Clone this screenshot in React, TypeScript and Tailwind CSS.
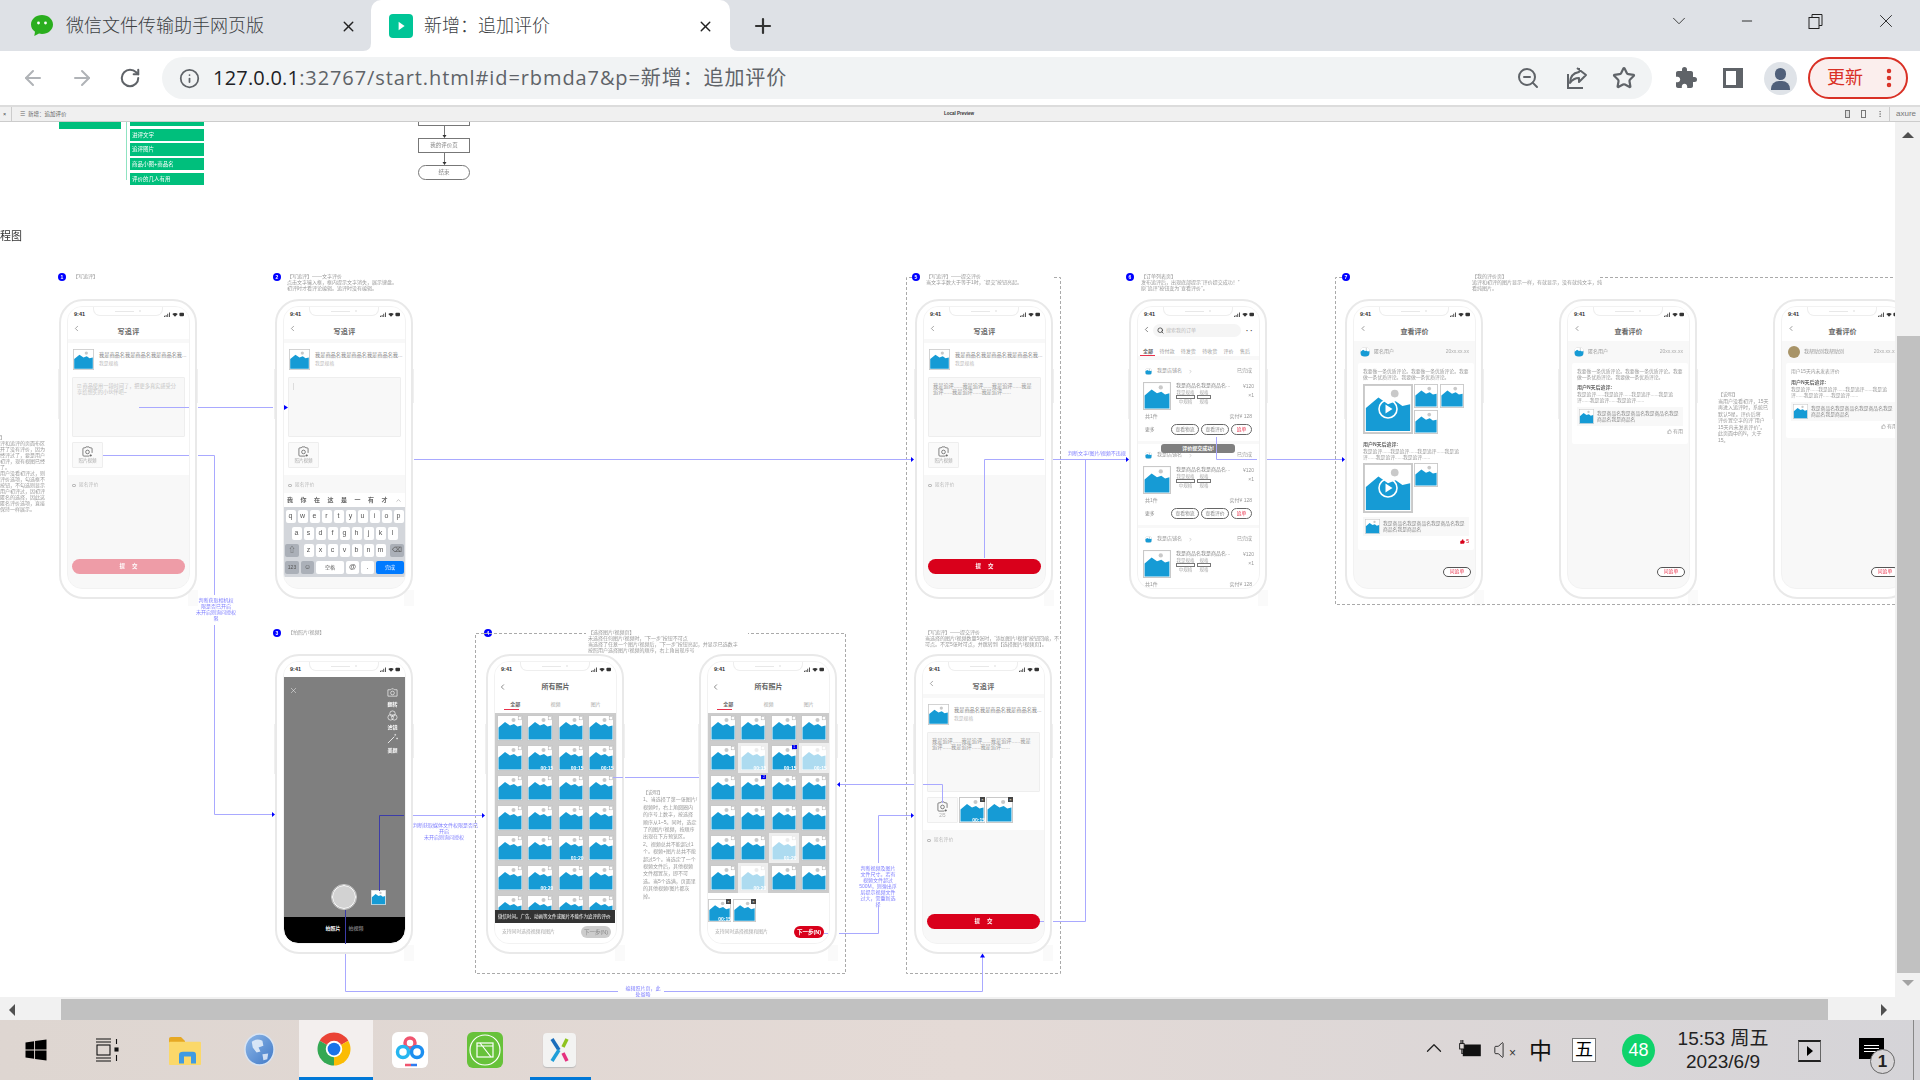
import React from "react";
import { ArrowLeft, ArrowRight, RotateCw, Info, ZoomOut, Star, X, Plus, Minus, ChevronDown, ChevronLeft, ChevronRight, ChevronUp, Search, Volume, ThumbsUp, EllipsisVertical } from "lucide-react";
import { MdExtension } from "react-icons/md";
import { FaWindows } from "react-icons/fa";

const BLUE = "#169bd5";

function Thumb({ className = "", chk = false, dur = "", badge = "", close = false, faded = false }: { className?: string; chk?: boolean; dur?: string; badge?: string; close?: boolean; faded?: boolean }) {
  return (
    <div className={`relative shrink-0 ${faded ? "bg-white outline-2 outline-[#eeeeee]" : ""} ${className}`}>
      <svg viewBox="0 0 26 26" preserveAspectRatio="none" className={`block w-full h-full ${faded ? "opacity-35" : ""}`}>
        <rect x="0" y="0" width="26" height="26" fill="#c9c9c9" />
        <rect x="1" y="1" width="24" height="24" fill="#fff" />
        <circle cx="16.5" cy="5" r="2" fill="#c9c9c9" />
        <path d="M1.5 24.5 V12.5 L8 7 L13 10.5 L17 9 L20.5 11.5 L24.5 10.5 V24.5 Z" fill={BLUE} />
        {chk && <rect x="21.2" y="1.6" width="3.2" height="3.2" fill="#fff" stroke="#aaa" strokeWidth="0.5" />}
      </svg>
      {dur && <span className="absolute right-0 bottom-0 text-[5px] leading-[6px] text-white font-bold">{dur}</span>}
      {badge && <span className="absolute right-0 top-0 w-[5px] h-[4px] bg-[#0000ee] text-white text-[3px] leading-[4px] text-center">{badge}</span>}
      {close && <span className="absolute right-0 top-0 w-[5px] h-[5px] bg-[#444] text-white text-[4px] leading-[5px] text-center">×</span>}
    </div>
  );
}

function StatusBar() {
  return (
    <div className="relative h-[15px] shrink-0 bg-white flex items-center justify-between pl-[6px] pr-[4px]">
      <span className="text-[5.5px] font-bold text-[#333]">9:41</span>
      <div className="absolute left-[25px] top-0 w-[70px] h-[9px] rounded-b-[7px] border border-t-0 border-[#eeeeee] bg-white flex items-center justify-center gap-[5px]">
        <span className="w-[19px] h-[1px] bg-[#e8e8e8]" />
        <span className="w-[2px] h-[2px] rounded-full bg-[#e8e8e8]" />
      </div>
      <svg viewBox="0 0 24 6" className="w-[22px] h-[5px]">
        <path d="M0 6h1V4.5H0zM2 6h1V3.5H2zM4 6h1V2H4zM6 6h1V.5H6z" fill="#333" />
        <path d="M10 2.5 C12 0.6 14.5 0.6 16.5 2.5 L13.2 5.8 Z" fill="#333" />
        <rect x="18.5" y="1" width="5.5" height="4" rx="1" fill="#333" />
      </svg>
    </div>
  );
}

function Phone({ className, children, noPatch = false }: { className: string; children: React.ReactNode; noPatch?: boolean }) {
  return (
    <div className={`absolute w-[138px] h-[300px] ${className}`}>
      {!noPatch && <div className="absolute left-[129px] top-[291px] w-[10px] h-[16px] bg-[#fafafa]" />}
      <div className="absolute left-[-1px] top-[70px] w-[1px] h-[50px] bg-[#f0f0f0]" />
      <div className="absolute right-[-1px] top-[70px] w-[1px] h-[34px] bg-[#f0f0f0]" />
      <div className="absolute inset-0 rounded-[24px] border-2 border-[#e9e9e9] bg-white" />
      <div className="absolute left-[9px] top-[8px] w-[121px] h-[281px] rounded-[14px] overflow-hidden flex flex-col bg-[#f8f8f8] outline outline-[#f2f2f2]">
        <StatusBar />
        {children}
      </div>
    </div>
  );
}

function Nav({ title }: { title: string }) {
  return (
    <div className="relative h-[17px] shrink-0 bg-white flex items-center justify-center pt-[4px]">
      <ChevronLeft className="absolute left-[4px] top-[2px] w-[9px] h-[9px] text-[#666]" strokeWidth={1.5} />
      <span className="text-[7px] font-bold text-[#666] tracking-[0.3px]">{title}</span>
    </div>
  );
}

const REVIEW = "我是追评......我是追评......我是追评......我是追评......我是追评......我是追评......";

function CameraPlus({ label }: { label: string }) {
  return (
    <div className="w-[31px] h-[26px] shrink-0 border border-[#eeeeee] rounded-[1px] bg-[#fafafa] flex flex-col items-center pt-[3px]">
      <svg viewBox="0 0 12 12" className="w-[11px] h-[11px]" fill="none" stroke="#555" strokeWidth="0.8">
        <path d="M3.5 2 L4.3 1 H7.7 L8.5 2 H10 Q11 2 11 3 V7.5 M8 11 H2 Q1 11 1 10 V3 Q1 2 2 2 H3.5" />
        <circle cx="6" cy="6.5" r="2" />
        <path d="M9.5 9 V11.6 M8.2 10.3 H10.8" />
      </svg>
      <span className="text-[4.5px] leading-[6px] mt-[1px] text-[#aaa]">{label}</span>
    </div>
  );
}

function WritePage({ text = "", hint = false, caret = false, keyboard = false, btn = "", photos = false }: { text?: string; hint?: boolean; caret?: boolean; keyboard?: boolean; btn?: string; photos?: boolean }) {
  return (
    <>
      <Nav title="写追评" />
      <div className="h-[4px] shrink-0" />
      <div className="h-[132px] shrink-0 bg-white px-[4px] pt-[6px] flex flex-col">
        <div className="h-[21px] flex items-start gap-[5px] pl-[1px] shrink-0">
          <Thumb className="w-[21px] h-[21px]" />
          <div className="flex flex-col pt-[3px] text-[#999]">
            <span className="text-[5.2px] leading-[7px] whitespace-nowrap text-[#888]">我是商品名我是商品名我是商品名我...</span>
            <span className="text-[4.8px] leading-[9px] whitespace-nowrap text-[#bbb]">我是规格</span>
          </div>
        </div>
        <div className="mt-[7px] h-[60px] shrink-0 bg-[#f8f8f8] border border-[#eeeeee] rounded-[1px] px-[4px] pt-[5px] text-[5.2px] leading-[6px] text-[#999]">
          {hint && <span className="text-[#c4c4c4]">☑ 商品使用一段时间了，把更多真实感受分享给想买的小伙伴吧~</span>}
          {caret && <span className="block w-[1px] h-[7px] bg-[#ddd]" />}
          {text}
        </div>
        <div className="mt-[5px] flex gap-[1px]">
          <CameraPlus label={photos ? "2/5" : "照片视频"} />
          {photos && (
            <>
              <Thumb className="w-[26px] h-[26px]" dur="00:15" close />
              <Thumb className="w-[27px] h-[26px]" close />
            </>
          )}
        </div>
      </div>
      <div className="mt-[7px] pl-[4px] flex items-center gap-[3px] h-[6px] shrink-0">
        <span className="w-[4px] h-[3px] border border-[#bbb] rounded-[1px]" />
        <span className="text-[4.8px] text-[#bbb]">匿名评价</span>
      </div>
      {keyboard && <Keyboard />}
      {btn && (
        <div className={`mt-auto mb-[14px] mx-[4px] h-[15px] rounded-full flex items-center justify-center gap-[7px] text-white text-[5.5px] font-bold ${btn}`}>
          <span>提</span>
          <span>交</span>
        </div>
      )}
    </>
  );
}

function Key({ k, className = "" }: { k: string; className?: string }) {
  return <span className={`h-[13px] rounded-[2px] flex items-center justify-center text-[7px] text-[#555] ${className}`}>{k}</span>;
}

function Keyboard() {
  return (
    <div className="mt-[5px] w-[121px] shrink-0">
      <div className="h-[14px] bg-white flex items-center justify-between px-[3px] text-[6px] font-bold text-[#666]">
        {["我", "你", "在", "这", "是", "一", "有", "才"].map((c) => (<span key={c}>{c}</span>))}
        <ChevronUp className="w-[7px] h-[7px] text-[#999]" />
      </div>
      <div className="h-[70px] bg-[#d3d6db] flex flex-col gap-[4px] pt-[3px]">
        <div className="flex justify-center gap-[2px]">
          {"qwertyuiop".split("").map((c) => (<Key key={c} k={c} className="w-[10px] bg-white" />))}
        </div>
        <div className="flex justify-center gap-[2px]">
          {"asdfghjkl".split("").map((c) => (<Key key={c} k={c} className="w-[10px] bg-white" />))}
        </div>
        <div className="flex justify-between px-[1px]">
          <Key k="⇧" className="w-[14px] bg-[#abb0b8]" />
          <div className="flex gap-[2px]">
            {"zxcvbnm".split("").map((c) => (<Key key={c} k={c} className="w-[10px] bg-white" />))}
          </div>
          <Key k="⌫" className="w-[14px] bg-[#abb0b8]" />
        </div>
        <div className="flex gap-[2px] px-[1px]">
          <Key k="123" className="w-[14px] bg-[#abb0b8] !text-[5px]" />
          <Key k="☺" className="w-[13px] bg-[#abb0b8]" />
          <Key k="空格" className="w-[28px] bg-white !text-[5px]" />
          <Key k="@" className="w-[13px] bg-white" />
          <Key k="." className="w-[13px] bg-white" />
          <Key k="完成" className="w-[28px] bg-[#007aff] !text-white !text-[5px]" />
        </div>
      </div>
    </div>
  );
}

function OrderCard({ cut = false }: { cut?: boolean }) {
  return (
    <div className={`shrink-0 bg-white px-[5px] pt-[7px] flex flex-col ${cut ? "h-[62px]" : "h-[81px]"}`}>
      <div className="h-[8px] flex items-center gap-[3px] px-[2px] text-[5px] text-[#999]">
        <Thumb className="w-[7px] h-[7px] rounded-full overflow-hidden" />
        <span className="ml-[2px]">我是店铺名</span>
        <ChevronRight className="w-[5px] h-[5px] ml-[3px]" />
        <span className="ml-auto">已完成</span>
      </div>
      <div className="mt-[7px] h-[28px] flex gap-[5px] shrink-0">
        <Thumb className="w-[28px] h-[28px]" />
        <div className="w-[55px] text-[5px] leading-[7px] text-[#888]">
          <div className="whitespace-nowrap">我是商品名我是商品名...</div>
          <div className="flex gap-[2px] mt-[1px] text-[#aaa] text-[4.5px] leading-[5px]">
            <div className="w-[19px] text-center">我是规格<div className="h-[4px] border border-[#777]" />中规格</div>
            <div className="w-[14px] text-center">规格<div className="h-[4px] border border-[#777]" />规格</div>
          </div>
        </div>
        <div className="ml-auto text-right text-[5px] leading-[9px] text-[#999]">¥120<br />×1</div>
      </div>
      <div className="mt-[3px] h-[8px] flex items-center justify-between text-[5px] text-[#999] px-[2px]">
        <span>共1件</span>
        <span>实付¥ 128</span>
      </div>
      {!cut && (
        <div className="mt-[3px] h-[11px] flex items-center gap-[2px] text-[4.8px] text-[#888] px-[2px]">
          <span className="mr-auto">更多</span>
          <span className="w-[28px] h-[11px] border border-[#666] rounded-full flex items-center justify-center">查看物流</span>
          <span className="w-[28px] h-[11px] border border-[#666] rounded-full flex items-center justify-center">查看评价</span>
          <span className="w-[21px] h-[11px] border border-[#666] rounded-full flex items-center justify-center text-[#e8304a]">追单</span>
        </div>
      )}
    </div>
  );
}

function OrderPage() {
  return (
    <>
      <div className="relative h-[26px] shrink-0 bg-white flex items-start pl-[4px] pt-[2px]">
        <ChevronLeft className="w-[9px] h-[9px] mt-[1px] text-[#666]" />
        <div className="ml-[2px] w-[88px] h-[13px] rounded-full bg-[#f5f5f5] flex items-center pl-[4px] gap-[2px] text-[5px] text-[#bbb]">
          <Search className="w-[7px] h-[7px] text-[#333]" strokeWidth={2.5} />搜索我的订单
        </div>
        <span className="ml-[5px] mt-[4px] text-[7px] leading-[6px] tracking-[2px] text-[#444] font-bold">··</span>
      </div>
      <div className="relative h-[8px] shrink-0 bg-white flex justify-between pl-[5px] pr-[9px] text-[5px] leading-[6px] text-[#999]">
        <span className="font-bold text-[#666]">全部</span><span>待付款</span><span>待发货</span><span>待收货</span><span>评价</span><span>售后</span>
        <span className="absolute left-[2px] bottom-0 w-[15px] h-[1px] bg-[#e8304a]" />
      </div>
      <div className="h-[4px] shrink-0" />
      <div className="relative flex flex-col gap-[3px]">
        <OrderCard />
        <OrderCard />
        <OrderCard cut />
        <div className="absolute left-[23px] top-[84px] w-[74px] h-[9px] rounded-[3px] bg-[#7f7f7f] text-white text-[5px] leading-[9px] text-center font-bold">评价提交成功!</div>
      </div>
    </>
  );
}

function Play({ size }: { size: string }) {
  return (
    <svg viewBox="0 0 20 20" className={`absolute ${size}`}>
      <circle cx="10" cy="10" r="9" fill="none" stroke="#fff" strokeWidth="1.6" />
      <path d="M7.5 5.5 L14.5 10 L7.5 14.5 Z" fill="#fff" />
    </svg>
  );
}

function BigVideo() {
  return (
    <div className="relative w-[50px] h-[50px] shrink-0 flex items-center justify-center">
      <Thumb className="w-[50px] h-[50px]" />
      <Play size="w-[20px] h-[20px]" />
    </div>
  );
}

function ReviewShell({ name, avatar, children, h }: { name: string; avatar?: boolean; children: React.ReactNode; h: string }) {
  return (
    <>
      <div className="h-[19px] shrink-0 bg-white relative flex items-center justify-center pt-[2px]">
        <ChevronLeft className="absolute left-[5px] top-[2px] w-[8px] h-[9px] text-[#666]" />
        <span className="text-[7px] font-bold text-[#666]">查看评价</span>
      </div>
      <div className="h-[22px] shrink-0 flex items-center px-[6px] gap-[4px]">
        {avatar ? (
          <span className="w-[12px] h-[12px] rounded-full bg-[#a89468]" />
        ) : (
          <Thumb className="w-[10px] h-[10px] rounded-full overflow-hidden" />
        )}
        <span className="text-[5px] text-[#999]">{name}</span>
        <span className="ml-auto text-[5px] text-[#aaa]">20xx.xx.xx</span>
      </div>
      <div className={`mx-[4px] bg-white rounded-[2px] px-[5px] pt-[6px] shrink-0 w-[116px] ${h}`}>{children}</div>
      <div className="mt-auto mb-[11px] mr-[4px] self-end w-[28px] h-[10px] rounded-full border border-[#555] bg-white text-[#e8304a] text-[4.8px] leading-[8px] text-center">问追单</div>
    </>
  );
}

function ProductStrip({ like }: { like: string }) {
  return (
    <>
      <div className="h-[19px] bg-[#f8f8f8] flex items-center gap-[3px] pl-[2px] pr-[4px]">
        <Thumb className="w-[15px] h-[15px]" />
        <div className="text-[4.8px] leading-[6px] text-[#888]">我是商品名我是商品名我是商品名我是商品名我是商品名</div>
      </div>
      <div className="mt-[2px] flex justify-end items-center gap-[1px] text-[5px] leading-[6px]">
        {like === "5" ? (
          <span className="text-[#d9001b] flex items-center gap-[1px]"><ThumbsUp className="w-[5px] h-[5px] fill-[#d9001b]" />5</span>
        ) : (
          <span className="text-[#999] flex items-center gap-[1px]"><ThumbsUp className="w-[5px] h-[5px]" />{like}</span>
        )}
      </div>
    </>
  );
}

function Lines({ className, lines }: { className: string; lines: string[] }) {
  return (
    <div className={`absolute whitespace-nowrap ${className}`}>
      {lines.map((l, i) => (<div key={i}>{l}</div>))}
    </div>
  );
}

function Badge({ className, n }: { className: string; n: string }) {
  return <span className={`absolute w-[8px] h-[8px] rounded-full bg-[#0000ff] text-white text-[5px] leading-[8px] text-center font-bold ${className}`}>{n}</span>;
}

function AlbumPage({ faded = [], btn, rows, extra }: { faded?: number[]; btn: string; rows: number; extra?: React.ReactNode }) {
  const durs: Record<number, string> = { 5: "00:15", 6: "00:15", 7: "00:15", 18: "01:20", 21: "00:20" };
  const badges: Record<number, string> = rows === 6 ? { 6: "1", 9: "2" } : {};
  return (
    <>
      <div className="relative h-[24px] shrink-0 bg-white flex items-center justify-center pb-[4px]">
        <ChevronLeft className="absolute left-[3px] top-[5px] w-[9px] h-[10px] text-[#666]" />
        <span className="text-[7px] font-bold text-[#666]">所有照片</span>
      </div>
      <div className="relative h-[12px] shrink-0 bg-white flex justify-around text-[5px] text-[#aaa] leading-[7px]">
        <span className="text-[#666] font-bold">全部</span><span>视频</span><span>图片</span>
        <span className="absolute left-[9px] top-[8px] w-[15px] h-[1px] bg-[#e8304a]" />
      </div>
      <div className={`bg-[#cccccc] grid grid-cols-4 gap-[4px] p-[2px] shrink-0 overflow-hidden ${rows === 6 ? "h-[180px]" : "h-[197px]"}`}>
        {Array.from({ length: rows * 4 }).map((_, i) => (
          <Thumb key={i} className="w-[26px] h-[26px]" chk dur={durs[i]} badge={badges[i]} faded={faded.includes(i)} />
        ))}
      </div>
      <div className="relative flex-1 bg-white">
        {extra}
        <div className="absolute left-[7px] bottom-[8px] text-[4.8px] text-[#aaa]">支持同时选择视频和图片</div>
        <div className={`absolute right-[5px] bottom-[5px] w-[30px] h-[12px] rounded-full flex items-center justify-center text-[5.5px] ${btn}`}>下一步(N)</div>
      </div>
    </>
  );
}

function Page() {
  return (
    <div className="absolute left-0 top-[-122px] w-[1895px] h-[1100px] blur-[0.4px]">
      {/* top-left green structure */}
      <div className="absolute left-[59px] top-[110px] w-[62px] h-[19px] bg-[#00bf7c]" />
      <div className="absolute left-[126px] top-[110px] w-[1px] h-[70px] bg-[#8fe3c2]" />
      {[
        ["top-[110px] h-[16px]", ""],
        ["top-[129px] h-[12px]", "进评文字"],
        ["top-[143px] h-[13px]", "追评图片"],
        ["top-[158px] h-[12px]", "商品小图+商品名"],
        ["top-[173px] h-[12px]", "评价的几人有用"],
      ].map(([c, t], i) => (
        <div key={i} className={`absolute left-[130px] w-[74px] bg-[#00bf7c] text-white text-[5.5px] pl-[2px] flex items-center ${c}`}>{t}</div>
      ))}
      {/* flowchart */}
      <div className="absolute left-[418px] top-[110px] w-[52px] h-[16px] border border-[#777] bg-white" />
      <div className="absolute left-[418px] top-[138px] w-[52px] h-[15px] border border-[#777] bg-white text-[5.5px] text-[#888] flex items-center justify-center">我的评价页</div>
      <div className="absolute left-[418px] top-[165px] w-[52px] h-[15px] rounded-full border border-[#777] bg-white text-[5.5px] text-[#888] flex items-center justify-center">结束</div>

      <div className="absolute left-0 top-[228px] text-[11px] leading-[16px] text-[#333]">程图</div>

      {/* left note */}
      <Lines className="left-0 top-[434px] text-[5px] leading-[6px] text-[#999]" lines={["】", "评和追评的页面布区", "开了没有评价，因为", "经评过了，要是用户", "初评，现有视图已经", "了。", "用户没看初评过，则", "评价选项，勾选框不", "按钮，不勾选则显示", "用户初评过，因初评", "匿名的选择，因此这", "匿名评价选项，直接", "保持一样展示。"]} />

      {/* headers */}
      <Badge className="left-[58px] top-[273px]" n="1" />
      <Lines className="left-[73px] top-[273px] text-[5px] leading-[6px] text-[#999]" lines={["【写追评】"]} />
      <Badge className="left-[273px] top-[273px]" n="2" />
      <Lines className="left-[287px] top-[273px] text-[5px] leading-[6px] text-[#999]" lines={["【写追评】——文字评价", "点击文字输入框，框内提示文字消失，展示键盘。", "初评时才看评论编辑。追评时没有编辑。"]} />
      <Badge className="left-[912px] top-[273px]" n="5" />
      <Lines className="left-[926px] top-[273px] text-[5px] leading-[6px] text-[#999]" lines={["【写追评】——提交评价", "当文字字数大于等于1时，“提交”按钮亮起。"]} />
      <Badge className="left-[1126px] top-[273px]" n="6" />
      <Lines className="left-[1141px] top-[273px] text-[5px] leading-[6px] text-[#999]" lines={["【订单列表页】", "发布追评后，出现底部提示“评价提交成功！”", "原“追评”按钮变为“查看评价”。"]} />
      <Badge className="left-[1342px] top-[273px]" n="7" />
      <Lines className="left-[1472px] top-[273px] text-[5px] leading-[6px] text-[#999]" lines={["【我的评价页】", "追评和初评的图片显示一样，有就显示，没有就纯文字，纯", "看纯图片。"]} />
      <Badge className="left-[273px] top-[629px]" n="3" />
      <Lines className="left-[288px] top-[629px] text-[5px] leading-[6px] text-[#999]" lines={["【拍照片/视频】"]} />
      <Badge className="left-[484px] top-[629px]" n="4" />
      <Lines className="left-[588px] top-[629px] text-[5px] leading-[6px] text-[#999]" lines={["【选择图片/视频页】", "未选择任何图片/视频时，“下一步”按钮不可点", "当选择了任意一个图片/视频后，“下一步”按钮亮起，并显示已选数字", "按照用户选择图片/视频的顺序，右上角出现序号"]} />
      <Lines className="left-[925px] top-[629px] text-[5px] leading-[6px] text-[#999]" lines={["【写追评】——提交评价", "当选择的图片/视频数量5张时，“添加图片/视频”按钮回缩，不", "可点。不足5张时可点，并跳转到【选择图片/视频页】。"]} />

      {/* phones */}
      <Phone className="left-[59px] top-[299px]"><WritePage hint btn="bg-[#ee9ca7]" /></Phone>
      <Phone className="left-[275px] top-[299px]"><WritePage caret keyboard /></Phone>
      <Phone className="left-[915px] top-[299px]"><WritePage text={REVIEW} btn="bg-[#d9001b]" /></Phone>
      <Phone className="left-[1129px] top-[299px]"><OrderPage /></Phone>

      <Phone className="left-[1345px] top-[299px]">
        <ReviewShell name="匿名用户" h="h-[187px]">
          <div className="text-[4.8px] leading-[6px] text-[#999] h-[15px]">我要做一条优质评论。我要做一条优质评论。我要做一条优质评论。我要做一条优质评论。</div>
          <div className="flex gap-[1px] h-[50px]">
            <BigVideo />
            <div className="grid grid-cols-2 gap-[1px] w-[50px] h-[50px]">
              <Thumb className="w-[24px] h-[24px]" />
              <Thumb className="w-[24px] h-[24px]" />
              <Thumb className="w-[24px] h-[24px]" />
            </div>
          </div>
          <div className="mt-[7px] text-[5px] leading-[6px] font-bold text-[#666]">用户N天后追评:</div>
          <div className="mt-[2px] text-[4.8px] leading-[6px] text-[#999] h-[14px]">{REVIEW}</div>
          <div className="flex gap-[1px] h-[50px]">
            <BigVideo />
            <Thumb className="w-[24px] h-[24px]" />
          </div>
          <div className="mt-[4px]"><ProductStrip like="5" /></div>
        </ReviewShell>
      </Phone>
      <Phone className="left-[1559px] top-[299px]">
        <ReviewShell name="匿名用户" h="h-[81px]">
          <div className="text-[4.8px] leading-[6px] text-[#999] h-[15px]">我要做一条优质评论。我要做一条优质评论。我要做一条优质评论。我要做一条优质评论。</div>
          <div className="text-[5px] leading-[6px] font-bold text-[#666]">用户N天后追评:</div>
          <div className="mt-[2px] text-[4.8px] leading-[6px] text-[#999] h-[15px]">{REVIEW}</div>
          <ProductStrip like="有用" />
        </ReviewShell>
      </Phone>
      <Phone className="left-[1773px] top-[299px]">
        <ReviewShell name="我帮助别我帮助别" avatar h="h-[75px]">
          <div className="text-[4.8px] leading-[6px] text-[#999] h-[10px]">用户15天内未发表评价</div>
          <div className="text-[5px] leading-[6px] font-bold text-[#666]">用户N天后追评:</div>
          <div className="mt-[2px] text-[4.8px] leading-[6px] text-[#999] h-[15px]">{REVIEW}</div>
          <ProductStrip like="有用" />
        </ReviewShell>
      </Phone>

      <Lines className="left-[1718px] top-[391px] text-[5px] leading-[6.5px] text-[#999]" lines={["【说明】", "当用户没看初评，15天", "再进入追评时，系统已", "默认5星。评价后将", "评价置空字的评“用户", "15天内未发表评价”。", "此页面中的N，大于", "15。"]} />

      {/* camera phone */}
      <Phone className="left-[275px] top-[654px]">
        <div className="relative h-[240px] shrink-0 bg-[#7f7f7f]">
          <X className="absolute left-[5px] top-[9px] w-[9px] h-[9px] text-white" strokeWidth={1.2} />
          <div className="absolute right-[7px] top-[10px] flex flex-col items-center gap-[3px] text-[5px] leading-[6px] text-white font-bold">
            <svg viewBox="0 0 12 12" className="w-[11px] h-[11px]" fill="none" stroke="#fff" strokeWidth="0.7"><path d="M1 3H4L5 2H7L8 3H11V10H1Z" /><circle cx="6" cy="6.5" r="2" /></svg>
            <span>翻转</span>
            <svg viewBox="0 0 12 12" className="w-[11px] h-[11px]" fill="none" stroke="#fff" strokeWidth="0.7"><circle cx="6" cy="4" r="3" /><circle cx="4" cy="8" r="3" /><circle cx="8" cy="8" r="3" /></svg>
            <span>滤镜</span>
            <svg viewBox="0 0 12 12" className="w-[11px] h-[11px]" fill="none" stroke="#fff" strokeWidth="0.9"><path d="M1 11L8 4" /><path d="M9 1V3M10 2H8M11 5V7M12 6H10" strokeWidth="0.6" /></svg>
            <span>美颜</span>
          </div>
          <div className="absolute left-[48px] top-[208px] w-[24px] h-[24px] rounded-full bg-[#d2d2d2] border border-white outline outline-[#cccccc]" />
          <Thumb className="absolute left-[87px] top-[213px] w-[15px] h-[15px]" />
        </div>
        <div className="flex-1 bg-black flex justify-center items-center gap-[8px] pb-[2px] text-[5px] font-bold">
          <span className="text-white">拍照片</span>
          <span className="text-[#777]">拍视频</span>
        </div>
      </Phone>

      <Phone className="left-[486px] top-[654px]">
        <AlbumPage btn="bg-[#cccccc] text-[#888]" rows={7} extra={null} />
        <div className="absolute left-0 top-[248px] w-[120px] h-[13px] bg-[#333333] text-white text-[4.5px] leading-[13px] pl-[3px] whitespace-nowrap">微信时间。广告、动画等文件或图片不能作为追评的评价</div>
      </Phone>
      <Phone className="left-[699px] top-[654px]">
        <AlbumPage faded={[5, 7, 18, 21]} btn="bg-[#d9001b] text-white font-bold" rows={6} extra={
          <div className="flex gap-[2px] pt-[6px]">
            <Thumb className="w-[23px] h-[23px]" dur="00:15" close />
            <Thumb className="w-[23px] h-[23px]" close />
          </div>
        } />
      </Phone>
      <Phone className="left-[914px] top-[654px]"><WritePage text={REVIEW} btn="bg-[#d9001b]" photos /></Phone>

      {/* album note */}
      <Lines className="left-[643px] top-[789px] text-[5px] leading-[7.4px] text-[#999]" lines={["【说明】", "1、当选择了第一张图片/", "视频时，右上角圆圈内", "的序号上数字，按选择", "顺序从1~5。同时，选定", "了的图片/视频，按顺序", "出现在下方预览区。", "2、视频总共不能超过1", "个。视频+图片总共不能", "超过5个。当选定了一个", "视频文件后，其他视频", "文件都置灰，即不可", "选。当5个选满，页面里", "的其他视频/图片都灰", "掉。"]} />

      {/* connector text */}
      <Lines className="left-[196px] top-[597px] w-[40px] text-center text-[5px] leading-[6px] text-[#8080ff]" lines={["判断获取相机权", "限是否已开启", "未开启则询问授权", "限"]} />
      <Lines className="left-[413px] top-[822px] w-[62px] text-center text-[5px] leading-[6px] text-[#8080ff]" lines={["判断获取媒体文件权限是否已", "开启", "未开启则询问授权"]} />
      <Lines className="left-[1068px] top-[450px] text-[5px] leading-[6px] text-[#8080ff]" lines={["判断文字/图片/视频不违规"]} />
      <Lines className="left-[856px] top-[865px] w-[44px] text-center text-[5px] leading-[6px] text-[#8080ff]" lines={["判断视频及图片", "文件尺寸。若有", "视频文件超过", "500M，则弹出浮", "层提示视频文件", "过大，需重新选", "择"]} />
      <Lines className="left-[622px] top-[985px] w-[42px] text-center text-[5px] leading-[6px] text-[#8080ff]" lines={["编辑照片页，此", "处省略"]} />

      {/* connectors and dashed frames */}
      <svg className="absolute left-0 top-0 w-[1895px] h-[1100px] pointer-events-none" viewBox="0 0 1895 1100" fill="none">
        <g stroke="#777777" strokeWidth="1">
          <path d="M444.500 126V136M444.500 153V163" />
        </g>
        <g fill="#333333">
          <path d="M444.500 138l-2-3h4zM444.500 165l-2-3h4z" />
        </g>
        <g stroke="#aaaaaa" strokeWidth="1" strokeDasharray="3 2">
          <path d="M912 277.5H906.5V973.5H1060.5V277.5H1054" />
          <path d="M1342 277.5H1335.5V604.5H1895M1600 277.5H1895" />
          <path d="M484 633.5H475.5V973.5H845.5V633.5H748M484 633.5H586" />
        </g>
        <g stroke="#a9a9ff" strokeWidth="1">
          <path d="M139 407.5H189M198 407.5H273" />
          <path d="M103 455.5H189M198 455.5H214.5V595M214.5 625V814.5H272" />
          <path d="M414 459.5H912" />
          <path d="M984.5 558V459.5H1044M1053 459.5H1127" />
          <path d="M1085.5 459.5V921.5H1053M1044 921.5H1040" />
          <path d="M1216.5 437V459.5H1257M1267 459.5H1343" />
          <path d="M413 815.5H483" />
          <path d="M345.5 954V991.5H618M664 991.5H982.5V957" />
          <path d="M613 777.5H623M625 777.5H699" />
          <path d="M839 784.5H914M923 784.5H942.5V803" />
          <path d="M839 933.5H878.5V905M878.5 863V815.5H912" />
          <path d="M824 933.5H828" />
        </g>
        <g stroke="#3c3ca8" strokeWidth="1">
          <path d="M404 815.5H379.5V891" />
          <path d="M345.5 910V944" />
        </g>
        <g fill="#0000ff">
          <path d="M288 407.5l-4-2.5v5z" />
          <path d="M275 814.5l-3-2.5v5z" />
          <path d="M914 459.5l-3-2.5v5z" />
          <path d="M1129 459.5l-3-2.5v5z" />
          <path d="M1345 459.5l-3-2.5v5z" />
          <path d="M485 815.5l-3-2.5v5z" />
          <path d="M837 784.5l3-2.5v5z" />
          <path d="M914 815.5l-3-2.5v5z" />
          <path d="M982.5 953.5l-2.5 4h5z" />
        </g>
      </svg>
    </div>
  );
}

function Tabs() {
  return (
    <div className="h-[51px] shrink-0 bg-[#dee1e6] flex items-end pl-[15px] relative text-[#3c4043]">
      <div className="w-[356px] h-[51px] flex items-center pl-[15px] relative">
        <svg viewBox="0 0 24 24" className="w-[24px] h-[24px] shrink-0">
          <path d="M12 1C5.9 1 1 5.2 1 10.5c0 3 1.6 5.6 4 7.3L4.3 22 9 19.6c1 .3 2 .4 3 .4 6.1 0 11-4.2 11-9.5S18.100 1 12 1z" fill="#2aae1e" />
          <circle cx="8.5" cy="9" r="1.4" fill="#fff" />
          <circle cx="15.500" cy="9" r="1.4" fill="#fff" />
        </svg>
        <span className="ml-[12px] mt-[2px] text-[18px] font-light whitespace-nowrap">微信文件传输助手网页版</span>
        <X className="absolute left-[325px] top-[18px] w-[17px] h-[17px] text-[#222]" strokeWidth={2} />
      </div>
      <div className="relative w-[359px] h-[51px] bg-white rounded-t-[10px] flex items-center pl-[18px]">
        <svg viewBox="0 0 8 8" className="absolute left-[-8px] bottom-0 w-[8px] h-[8px]"><path d="M8 0V8H0Q8 8 8 0Z" fill="#fff" /></svg>
        <svg viewBox="0 0 8 8" className="absolute right-[-8px] bottom-0 w-[8px] h-[8px]"><path d="M0 0V8H8Q0 8 0 0Z" fill="#fff" /></svg>
        <span className="w-[24px] h-[24px] rounded-[4px] bg-[#00c597] flex items-center justify-center shrink-0">
          <svg viewBox="0 0 10 10" className="w-[12px] h-[12px]"><path d="M3 1.500L8 5 3 8.500Z" fill="#fff" /></svg>
        </span>
        <span className="ml-[11px] mt-[2px] text-[18px] font-light whitespace-nowrap">新增：追加评价</span>
        <X className="absolute left-[326px] top-[18px] w-[17px] h-[17px] text-[#222]" strokeWidth={2} />
      </div>
      <Plus className="ml-[21px] mb-[13px] w-[24px] h-[24px] text-[#333]" strokeWidth={2.2} />
      <ChevronDown className="absolute left-[1667px] top-[10px] w-[24px] h-[22px] text-[#333]" strokeWidth={1} />
      <Minus className="absolute left-[1739px] top-[13px] w-[16px] h-[16px] text-[#222]" strokeWidth={1.4} />
      <svg viewBox="0 0 16 16" className="absolute left-[1808px] top-[13px] w-[16px] h-[17px]" fill="none" stroke="#222" strokeWidth="1"><rect x="1" y="4" width="10" height="11" /><path d="M4 4V1H14V12H11" /></svg>
      <X className="absolute left-[1875px] top-[9px] w-[22px] h-[24px] text-[#222]" strokeWidth={1} />
    </div>
  );
}

function Toolbar() {
  return (
    <div className="h-[54px] shrink-0 bg-white relative flex items-center pl-[21px]">
      <ArrowLeft className="w-[24px] h-[24px] text-[#b0b3b7]" strokeWidth={2} />
      <ArrowRight className="ml-[25px] w-[24px] h-[24px] text-[#b0b3b7]" strokeWidth={2} />
      <RotateCw className="ml-[25px] w-[22px] h-[22px] text-[#5f6368]" strokeWidth={2.2} />
      <div className="ml-[21px] w-[1490px] h-[42px] rounded-full bg-[#f1f3f4] flex items-center pl-[17px] relative">
        <Info className="w-[21px] h-[21px] text-[#5f6368]" strokeWidth={2} />
        <span className="ml-[13px] text-[20px] tracking-[0.9px] whitespace-nowrap text-[#5f6368] font-['Open_Sans','Noto_Sans_CJK_SC',sans-serif]"><span className="text-[#202124] tracking-[0.2px]">127.0.0.1</span>:32767/start.html#id=rbmda7&amp;p=新增：追加评价</span>
        <ZoomOut className="absolute left-[1354px] top-[9px] w-[24px] h-[24px] text-[#5f6368]" strokeWidth={2} />
        <svg viewBox="0 0 24 24" className="absolute left-[1403px] top-[9px] w-[24px] h-[24px]" fill="none" stroke="#5f6368" strokeWidth="2">
          <path d="M12 2V2L21 9L14 16V12C9 12 7 14 5 17C5 11 8 7 14 6V2" strokeLinejoin="round" />
          <path d="M3 8V22H18" />
        </svg>
        <Star className="absolute left-[1450px] top-[9px] w-[24px] h-[24px] text-[#5f6368]" strokeWidth={2.2} />
      </div>
      <MdExtension className="absolute left-[1674px] top-[15px] w-[24px] h-[24px] text-[#5f6368]" />
      <svg viewBox="0 0 20 20" className="absolute left-[1723px] top-[17px] w-[20px] h-[20px]"><path d="M0 0H20V20H0ZM3 3V17H13V3Z" fill="#5f6368" fillRule="evenodd" /></svg>
      <div className="absolute left-[1764px] top-[11px] w-[33px] h-[33px] rounded-full bg-[#dfe3e8] overflow-hidden flex flex-col items-center">
        <span className="mt-[6px] w-[11px] h-[12px] rounded-full bg-[#50607a]" />
        <span className="mt-[1px] w-[19px] h-[9px] rounded-t-[8px] bg-[#50607a]" />
      </div>
      <div className="absolute left-[1808px] top-[6px] w-[100px] h-[42px] rounded-full border-2 border-[#d93025] bg-[#fbeeed] flex items-center pl-[17px] text-[#d93025] text-[18px]">
        更新
        <EllipsisVertical className="absolute left-[67px] top-[7px] w-[24px] h-[24px] text-[#d93025]" strokeWidth={2.5} />
      </div>
    </div>
  );
}

function AxureBar() {
  return (
    <div className="shrink-0">
      <div className="h-[2px] bg-[#dcdcdc]" />
      <div className="h-[15px] bg-[#f0f0f0] border-b border-[#cccccc] relative flex items-center text-[5.5px] text-[#666]">
        <span className="ml-[3px] w-[9px] border-r border-[#ccc] text-[#444] leading-[14px]">×</span>
        <span className="ml-[8px] text-[6px]">☰</span>
        <span className="ml-[3px]">新增：追加评价</span>
        <span className="absolute left-[944px] text-[#333] text-[4.5px] font-bold">Local Preview</span>
        <span className="absolute left-[1845px] top-[3px] w-[5px] h-[8px] border border-[#777] bg-[#ddd]" />
        <span className="absolute left-[1861px] top-[3px] w-[5px] h-[8px] border border-[#777]" />
        <EllipsisVertical className="absolute left-[1876px] top-[3px] w-[8px] h-[8px] text-[#777]" />
        <span className="absolute left-[1889px] top-0 h-[14px] border-l border-[#ccc]" />
        <span className="absolute left-[1896px] text-[8px] text-[#777]">axure</span>
      </div>
    </div>
  );
}

function Taskbar() {
  return (
    <div className="h-[60px] shrink-0 relative flex items-center text-black bg-gradient-to-r from-[#ded6d1] via-[#e4dad6] to-[#d5d4d8]">
      <FaWindows className="absolute left-[24px] top-[18px] w-[24px] h-[24px] text-black" />
      <svg viewBox="0 0 24 24" className="absolute left-[96px] top-[18px] w-[24px] h-[24px]" fill="none" stroke="#111" strokeWidth="1.1">
        <path d="M0 1H15M0 4H15M0 20H15M0 23H15" />
        <rect x="1" y="7" width="13" height="10" />
        <rect x="19" y="10" width="3" height="3" fill="#111" />
        <path d="M20.500 1V6M20.500 17V23" />
      </svg>
      <svg viewBox="0 0 32 36" className="absolute left-[169px] top-[17px] w-[32px] h-[28px]" preserveAspectRatio="none">
        <path d="M0 2Q0 0 2 0H12L16 5V10H0Z" fill="#e6a823" />
        <rect x="0" y="6" width="32" height="30" rx="1" fill="#fbd869" />
        <path d="M10 34V23Q10 19 14 19H24Q27 19 27 23V34H22V25H15V34Z" fill="#3f9be2" />
      </svg>
      <svg viewBox="0 0 32 34" className="absolute left-[244px] top-[13px] w-[31px] h-[33px]">
        <defs>
          <linearGradient id="globeFill" x1="0" y1="0" x2="1" y2="1"><stop offset="0" stopColor="#8fb8e8" /><stop offset="1" stopColor="#3f78c6" /></linearGradient>
        </defs>
        <ellipse cx="16" cy="17" rx="15" ry="16" fill="url(#globeFill)" stroke="#d8e4f3" strokeWidth="1.5" />
        <path d="M8 9Q13 5 19 8L20 13L15 15L17 19L13 20L9 15Z" fill="#e3edf8" opacity="0.9" />
        <path d="M19 22L25 21L24 27L20 28Z" fill="#dbe7f6" opacity="0.9" />
      </svg>
      <div className="absolute left-[299px] top-0 w-[74px] h-[60px] bg-[#f3efee] border-b-[3px] border-[#0078d7]">
        <svg viewBox="0 0 48 48" className="absolute left-[17px] top-[11px] w-[36px] h-[36px]">
          <path d="M24 24L4.950 13A22 22 0 0 1 43.050 13Z" fill="#ea4335" />
          <path d="M24 24L43.050 13A22 22 0 0 1 24 46Z" fill="#fbbc04" />
          <path d="M24 24L24 46A22 22 0 0 1 4.950 13Z" fill="#34a853" />
          <circle cx="24" cy="24" r="11" fill="#fff" />
          <circle cx="24" cy="24" r="8.500" fill="#1a73e8" />
        </svg>
      </div>
      <div className="absolute left-[392px] top-[12px] w-[36px] h-[36px] rounded-[6px] bg-white overflow-hidden">
        <svg viewBox="0 0 36 36" className="w-full h-full" fill="none" strokeWidth="3.500">
          <circle cx="18" cy="11" r="5" stroke="#f0556f" />
          <circle cx="11" cy="20" r="5.500" stroke="#27b6f0" />
          <circle cx="25" cy="20" r="5.500" stroke="#1d8ff0" />
          <path d="M13 33H19" stroke="#f0556f" strokeWidth="2.500" />
          <path d="M19 33H25" stroke="#2f7cf0" strokeWidth="2.500" />
        </svg>
      </div>
      <div className="absolute left-[467px] top-[12px] w-[36px] h-[36px] rounded-[6px] bg-[#67c23a]">
        <svg viewBox="0 0 36 36" className="w-full h-full" fill="none" stroke="#fff" strokeWidth="1.200">
          <circle cx="18" cy="18" r="15" />
          <rect x="10" y="11" width="16" height="14" />
          <path d="M10 14H26M13 11L24 25" />
        </svg>
      </div>
      <div className="absolute left-[530px] top-0 w-[61px] h-[60px] border-b-[3px] border-[#0078d7]">
        <div className="absolute left-[13px] top-[13px] w-[33px] h-[34px] rounded-[4px] bg-[#f3f3f2] shadow-[0_1px_1px_#bbb]">
          <svg viewBox="0 0 33 34" className="w-full h-full" fill="none" strokeWidth="3.500">
            <path d="M9 6L16 17" stroke="#1b6dbb" />
            <path d="M16 17L9 28" stroke="#1f9ed8" />
            <path d="M24 6L20 14" stroke="#8fc31f" />
            <path d="M20 20L24 28" stroke="#e5317f" />
          </svg>
        </div>
      </div>
      <ChevronUp className="absolute left-[1421px] top-[15px] w-[26px] h-[26px] text-[#222]" strokeWidth={1.2} />
      <svg viewBox="0 0 26 20" className="absolute left-[1458px] top-[20px] w-[24px] h-[18px]" fill="none">
        <rect x="5" y="5" width="20" height="13" fill="#111" />
        <rect x="1.500" y="4" width="5" height="6" fill="#e0dbd9" stroke="#111" />
        <path d="M3 0V4M5 0V4M4 10V15H5" stroke="#111" strokeWidth="1.200" />
      </svg>
      <Volume className="absolute left-[1493px] top-[18px] w-[22px] h-[24px] text-[#222]" strokeWidth={1} />
      <span className="absolute left-[1509px] top-[27px] text-[12px] leading-[12px] text-[#333]">×</span>
      <span className="absolute left-[1529px] top-[15px] text-[23px] leading-[28px] text-[#111] font-['Noto_Sans_CJK_SC',sans-serif]">中</span>
      <span className="absolute left-[1572px] top-[18px] w-[24px] h-[24px] border border-[#777] bg-white text-[18px] leading-[22px] text-center text-black">五</span>
      <div className="absolute left-[1622px] top-[14px] w-[33px] h-[33px] rounded-full bg-[#0fd36b] flex items-center justify-center text-white text-[18px]">48</div>
      <div className="absolute left-[1658px] top-[7px] w-[130px] text-center text-[#222] text-[19px] leading-[23px] font-['Liberation_Sans','Noto_Sans_CJK_SC',sans-serif]">
        <div>15:53 周五</div>
        <div>2023/6/9</div>
      </div>
      <div className="absolute left-[1798px] top-[20px] w-[23px] h-[22px] border-y-2 border-[#222] flex items-center justify-center border-x border-x-[#666]">
        <span className="w-0 h-0 border-y-[5px] border-y-transparent border-l-[6px] border-l-black" />
      </div>
      <div className="absolute left-[1859px] top-[18px] w-[25px] h-[21px] bg-black flex flex-col justify-center gap-[2px] px-[5px]">
        <span className="h-[1px] bg-white" />
        <span className="h-[1px] bg-white" />
        <span className="h-[1px] bg-white" />
      </div>
      <div className="absolute left-[1870px] top-[29px] w-[25px] h-[25px] rounded-full border border-[#666] bg-[#d8d6d8] flex items-center justify-center text-[17px] font-bold text-[#222]">1</div>
      <span className="absolute left-[1913px] top-0 h-[60px] border-l border-[#888]" />
    </div>
  );
}

function Arrow({ className }: { className: string }) {
  return <span className={`block w-0 h-0 ${className}`} />;
}

export default function App() {
  return (
    <div className="w-[1920px] h-[1080px] overflow-hidden flex flex-col bg-white font-['Liberation_Sans','Noto_Sans_CJK_SC',sans-serif]">
      <Tabs />
      <Toolbar />
      <AxureBar />
      <div className="flex flex-1 min-h-0">
        <div className="w-[1895px] flex flex-col">
          <div className="relative flex-1 overflow-hidden bg-white"><Page /></div>
          <div className="h-[23px] shrink-0 bg-[#f1f1f1] pt-[2px] flex">
            <div className="w-[61px] flex items-center pl-[9px]"><Arrow className="border-y-[6px] border-y-transparent border-r-[6px] border-r-[#505050]" /></div>
            <div className="w-[1767px] bg-[#c1c1c1]" />
            <div className="flex-1 flex items-center justify-end pr-[8px]"><Arrow className="border-y-[6px] border-y-transparent border-l-[6px] border-l-[#505050]" /></div>
          </div>
        </div>
        <div className="flex-1 bg-[#f1f1f1] relative flex flex-col items-center">
          <Arrow className="mt-[10px] border-x-[6px] border-x-transparent border-b-[6px] border-b-[#505050]" />
          <div className="absolute left-[2px] top-[214px] right-0 h-[637px] bg-[#c1c1c1]" />
          <Arrow className="absolute top-[858px] border-x-[6px] border-x-transparent border-t-[6px] border-t-[#a3a3a3]" />
        </div>
      </div>
      <Taskbar />
    </div>
  );
}
